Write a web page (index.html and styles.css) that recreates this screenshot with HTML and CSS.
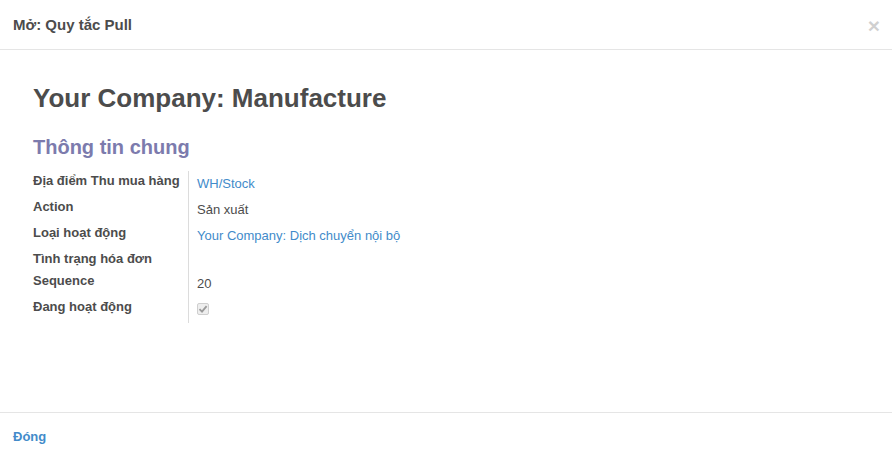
FILE: index.html
```html
<!DOCTYPE html>
<html lang="vi">

<head>
    <meta charset="UTF-8">
    <meta name="viewport" content="width=device-width, initial-scale=1.0">
    <title>Mở: Quy tắc Pull</title>
    <link rel="stylesheet" href="styles.css">
</head>

<body>
    <div class="modal">
        <div class="modal-header">
            <h4 class="modal-title">Mở: Quy tắc Pull</h4>
            <span class="close">&times;</span>
        </div>
        <div class="modal-body">
            <h1 class="record-name">Your Company: Manufacture</h1>
            <h2 class="group-title">Thông tin chung</h2>
            <table class="group">
                <tr>
                    <td class="label">Địa điểm Thu mua hàng</td>
                    <td class="value"><a href="#">WH/Stock</a></td>
                </tr>
                <tr>
                    <td class="label">Action</td>
                    <td class="value">Sản xuất</td>
                </tr>
                <tr>
                    <td class="label">Loại hoạt động</td>
                    <td class="value"><a href="#">Your Company: Dịch chuyển nội bộ</a></td>
                </tr>
                <tr>
                    <td class="label">Tình trạng hóa đơn</td>
                    <td class="value empty"></td>
                </tr>
                <tr>
                    <td class="label">Sequence</td>
                    <td class="value">20</td>
                </tr>
                <tr>
                    <td class="label">Đang hoạt động</td>
                    <td class="value">
                        <span class="checkbox">
                            <svg width="10" height="10" viewBox="0 0 10 10">
                                <path d="M1.5 5.2 L4 7.6 L8.6 2.2" fill="none" stroke="#9a9a9a" stroke-width="1.8" />
                            </svg>
                        </span>
                    </td>
                </tr>
            </table>
        </div>
        <div class="modal-footer">
            <a href="#" class="btn-close">Đóng</a>
        </div>
    </div>
</body>

</html>
```

FILE: styles.css
```css
html,
body {
    margin: 0;
    height: 100%;
}

body {
    font-family: "Liberation Sans", Arial, sans-serif;
    font-size: 13px;
    color: #4c4c4c;
    background: #fff;
}

a {
    color: #428bca;
    text-decoration: none;
}

.modal {
    display: flex;
    flex-direction: column;
    height: 100%;
}

.modal-header {
    display: flex;
    align-items: center;
    justify-content: space-between;
    height: 49px;
    padding: 0 13px;
    border-bottom: 1px solid #e5e5e5;
    flex-shrink: 0;
}

.modal-title {
    margin: 0;
    font-size: 15px;
    line-height: 20px;
    font-weight: bold;
    color: #4c4c4c;
}

.close {
    font-size: 21px;
    font-weight: bold;
    line-height: 1;
    color: #000;
    opacity: 0.18;
    margin-right: -1px;
    margin-top: 1px;
}

.modal-body {
    flex: 1;
    padding: 0 33px;
}

.record-name {
    margin: 33px 0 0;
    font-size: 26px;
    line-height: 30px;
    font-weight: bold;
    color: #4c4c4c;
}

.group-title {
    margin: 22px 0 0;
    font-size: 20px;
    line-height: 24px;
    font-weight: bold;
    color: #7c7bad;
}

.group {
    margin-top: 12px;
    font-size: 13px;
    border-collapse: collapse;
    border-spacing: 0;
}

.group td {
    padding: 0;
    line-height: 20px;
    vertical-align: top;
}

.group .label {
    width: 147px;
    padding: 0 8px 2px 0;
    font-weight: bold;
    white-space: nowrap;
    border-right: 1px solid #dcdcdc;
}

.group .value {
    padding: 3px 0 3px 8px;
    color: #4c4c4c;
}

.group .empty {
    padding: 0;
}

.checkbox {
    display: inline-block;
    width: 10px;
    height: 10px;
    margin-top: 3px;
    border: 1px solid #cfcfcf;
    border-radius: 2px;
    background: #eeeeee;
    vertical-align: top;
}

.checkbox svg {
    display: block;
}

.modal-footer {
    flex-shrink: 0;
    height: 46px;
    padding: 15px 13px 0;
    box-sizing: border-box;
    border-top: 1px solid #e5e5e5;
}

.btn-close {
    font-weight: bold;
    line-height: 18px;
}
```
